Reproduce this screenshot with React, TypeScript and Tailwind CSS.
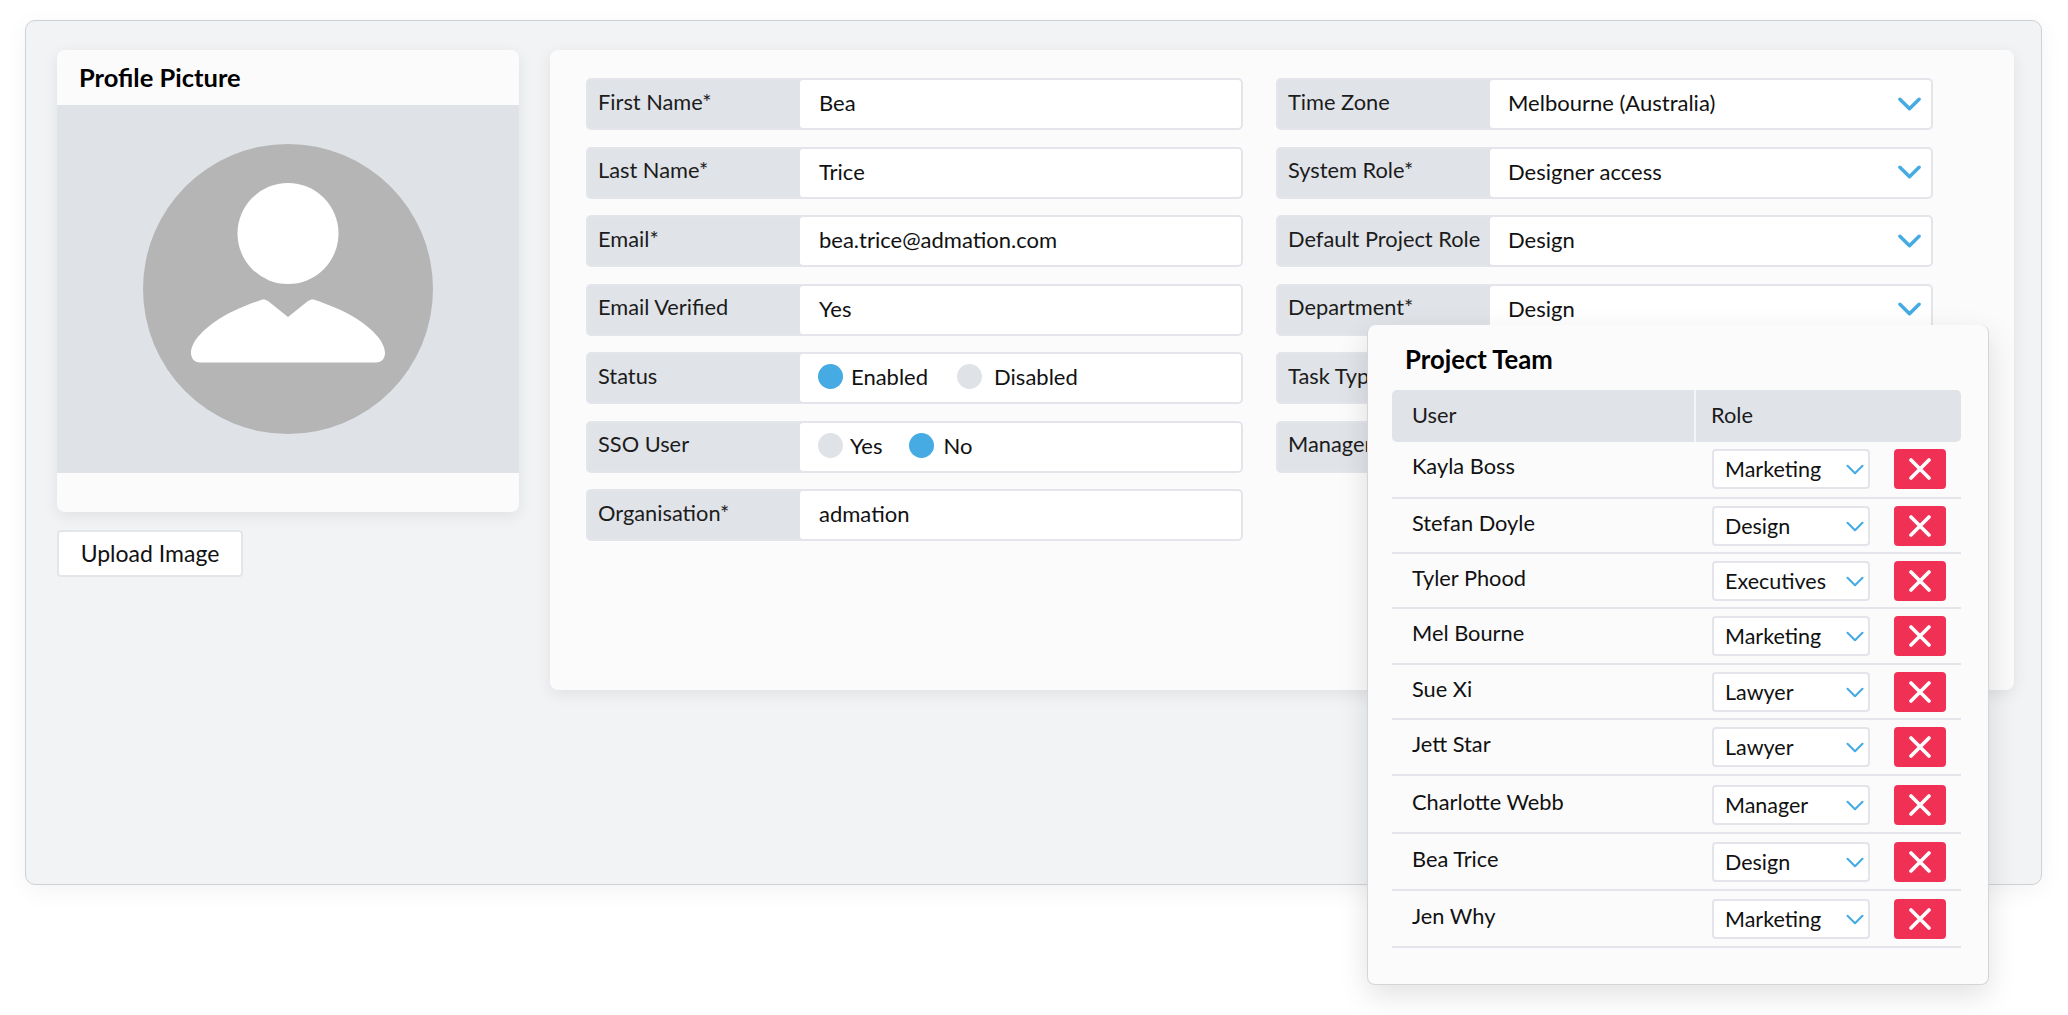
const font = { fontFamily: "Lato, 'Noto Sans', sans-serif" };

function Chevron({ small }: { small?: boolean }) {
  return (
    <svg
      viewBox="0 0 24 14"
      className={small ? "w-[18px] h-[11px] shrink-0" : "w-[23px] h-[14px] shrink-0 mt-[2px]"}
      fill="none"
      stroke="#45abe2"
      strokeWidth={small ? 2.8 : 3.6}
      strokeLinecap="round"
      strokeLinejoin="round"
    >
      <polyline points="2,2 12,12 22,2" />
    </svg>
  );
}

function Radio({ on }: { on?: boolean }) {
  return <span className={on ? "block w-[25px] h-[25px] rounded-full bg-[#45abe2]" : "block w-[25px] h-[25px] rounded-full bg-[#dfe2e7]"} />;
}

function Row({ label, children }: { label: string; children: React.ReactNode }) {
  return (
    <div className="flex h-[52px] rounded-[5px] bg-[#e0e3e8] border-2 border-[#e3e5ea]">
      <div className="w-[212px] shrink-0 pl-[10px] pb-[4px] flex items-center text-[21.8px] text-[#1c1c1c] whitespace-nowrap">{label}</div>
      <div className="flex-1 min-w-0 bg-white rounded-[3px] flex items-center pl-[18px] pr-[10px] pb-[3px] text-[22px] text-[#111]">{children}</div>
    </div>
  );
}

function SelectRow({ label, value }: { label: string; value: string }) {
  return (
    <Row label={label}>
      <span className="flex-1">{value}</span>
      <Chevron />
    </Row>
  );
}

const team = [
  { name: "Kayla Boss", role: "Marketing", h: "h-[57px]" },
  { name: "Stefan Doyle", role: "Design", h: "h-[55px]" },
  { name: "Tyler Phood", role: "Executives", h: "h-[55px]" },
  { name: "Mel Bourne", role: "Marketing", h: "h-[56px]" },
  { name: "Sue Xi", role: "Lawyer", h: "h-[55px]" },
  { name: "Jett Star", role: "Lawyer", h: "h-[56px]" },
  { name: "Charlotte Webb", role: "Manager", h: "h-[58px] pt-[2px]" },
  { name: "Bea Trice", role: "Design", h: "h-[57px] pt-[1px]" },
  { name: "Jen Why", role: "Marketing", h: "h-[57px] pt-[1px]" },
];

export default function App() {
  return (
    <div className="relative w-[2068px] h-[1015px] bg-white overflow-hidden pt-[20px] pl-[25px]" style={font}>
      <div className="flex items-start w-[2017px] h-[865px] rounded-[10px] bg-[#f2f3f5] border border-[#cfd1d4] pl-[31px] pt-[29px] shadow-[0_6px_24px_rgba(0,0,0,0.05)]">
        <div className="w-[462px] shrink-0">
          <div className="rounded-[8px] bg-[#fbfbfc] overflow-hidden shadow-[0_4px_16px_rgba(0,0,0,0.08)]">
            <div className="h-[55px] flex items-center pl-[22px] text-[25.5px] font-bold text-black">Profile Picture</div>
            <div className="h-[368px] bg-[#dfe2e7] flex items-center justify-center">
              <svg viewBox="0 0 290 290" className="w-[290px] h-[290px]">
                <circle cx="145" cy="145" r="145" fill="#b5b5b5" />
                <circle cx="145" cy="89.5" r="50.5" fill="#fff" />
                <path
                  d="M57 218.5 C51 218.5 48 214 48 209 C48 197 62 184 76 175 C90 166 106 160 118 156 C121 155 123 156 125 157 L145 173 L165 157 C167 156 169 155 172 156 C184 160 200 166 214 175 C228 184 242 197 242 209 C242 214 239 218.5 233 218.5 Z"
                  fill="#fff"
                />
              </svg>
            </div>
            <div className="h-[39px]" />
          </div>
          <div className="mt-[18px] w-[186px] h-[47px] flex items-center justify-center rounded-[4px] bg-white border-2 border-[#e3e5ea] text-[23px] text-[#111]">
            Upload Image
          </div>
        </div>
        <div className="ml-[31px] w-[1464px] h-[640px] rounded-[8px] bg-[#fbfbfc] shadow-[0_4px_16px_rgba(0,0,0,0.08)] pl-[36px] pt-[28px] flex gap-[33px]">
          <div className="w-[657px] flex flex-col gap-[16.5px]">
            <Row label="First Name*"><span className="ml-[1px]">Bea</span></Row>
            <Row label="Last Name*"><span className="ml-[1px]">Trice</span></Row>
            <Row label="Email*"><span className="ml-[1px]">bea.trice@admation.com</span></Row>
            <Row label="Email Verified"><span className="ml-[1px]">Yes</span></Row>
            <Row label="Status">
              <Radio on />
              <span className="ml-[8px]">Enabled</span>
              <span className="ml-[29px]"><Radio /></span>
              <span className="ml-[12px]">Disabled</span>
            </Row>
            <Row label="SSO User">
              <Radio />
              <span className="ml-[7px]">Yes</span>
              <span className="ml-[27px]"><Radio on /></span>
              <span className="ml-[9px]">No</span>
            </Row>
            <Row label="Organisation*"><span className="ml-[1px]">admation</span></Row>
          </div>
          <div className="w-[657px] flex flex-col gap-[16.5px]">
            <SelectRow label="Time Zone" value="Melbourne (Australia)" />
            <SelectRow label="System Role*" value="Designer access" />
            <SelectRow label="Default Project Role" value="Design" />
            <SelectRow label="Department*" value="Design" />
            <SelectRow label="Task Type" value="" />
            <SelectRow label="Manager" value="" />
          </div>
        </div>
      </div>

      <div className="absolute left-[1367px] top-[325px] w-[622px] h-[660px] rounded-[8px] bg-[#fbfbfc] border-b border-x border-[#d4d5d8] shadow-[0_10px_30px_rgba(0,0,0,0.12)] pl-[24px] pr-[27px]">
        <div className="h-[65px] flex items-center pl-[13px] pt-[4px] text-[25.7px] font-bold text-black">Project Team</div>
        <div className="flex h-[52px] rounded-[5px] bg-[#e0e3e8] text-[21.8px] text-[#1c1c1c]">
          <div className="w-[304px] pl-[20px] pb-[2px] flex items-center border-r-2 border-[#f4f5f6]">User</div>
          <div className="pl-[15px] pb-[2px] flex items-center">Role</div>
        </div>
        {team.map((m) => (
          <div key={m.name} className={`${m.h} flex items-start border-b-2 border-[#e3e5ea] text-[21.8px] text-[#111]`}>
            <div className="w-[320px] pl-[20px] pt-[8px]">{m.name}</div>
            <div className="mt-[7px] w-[158px] h-[40px] flex items-center rounded-[4px] bg-white border-2 border-[#e3e5ea] pl-[11px] pr-[4px]">
              <span className="flex-1 text-[21.5px]">{m.role}</span>
              <Chevron small />
            </div>
            <div className="mt-[7px] ml-[24px] w-[52px] h-[40px] flex items-center justify-center rounded-[4px] bg-[#f03055]">
              <svg viewBox="0 0 22 22" className="w-[22px] h-[22px]" fill="none" stroke="#fff" strokeWidth="3.6" strokeLinecap="round">
                <path d="M2 2 L20 20 M20 2 L2 20" />
              </svg>
            </div>
          </div>
        ))}
      </div>
    </div>
  );
}
